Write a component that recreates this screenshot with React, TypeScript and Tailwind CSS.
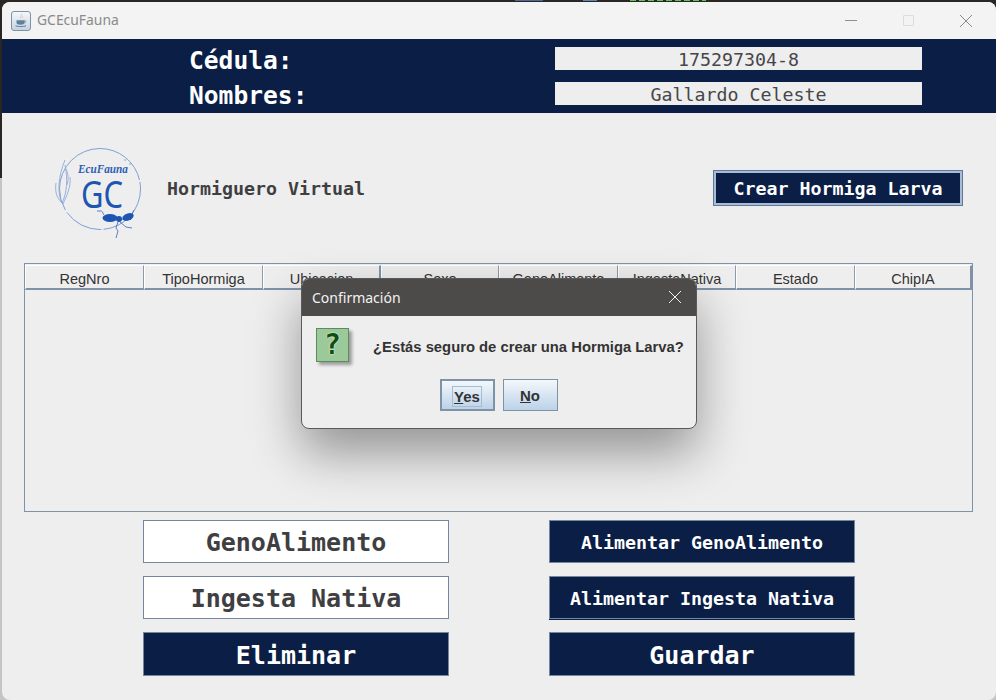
import React from "react";

const mono = "font-['DejaVu_Sans_Mono',monospace]";
const arial = "font-['Liberation_Sans',Arial,sans-serif]";
const ui = "font-['Noto_Sans',sans-serif]";

function JavaIcon() {
  return (
    <svg width="20" height="20" viewBox="0 0 20 20" className="block">
      <defs>
        <linearGradient id="jg" x1="0" y1="0" x2="0" y2="1">
          <stop offset="0" stopColor="#f6f8fa" />
          <stop offset="1" stopColor="#c3d2e0" />
        </linearGradient>
      </defs>
      <rect x="0.5" y="0.5" width="19" height="19" rx="2.5" fill="url(#jg)" stroke="#7c93a8" />
      <path d="M10 2.5c1.8 1.8-1.8 2.8-.4 5.2C7.8 6 11 4.8 10 2.5z" fill="#d9531e" />
      <path d="M11.8 4.5c.5 1.1-1.1 1.6-.7 3-.9-1 .6-1.8.7-3z" fill="#e08a2e" />
      <path d="M5.5 9.2h8v2.4c0 1.4-1.4 2.2-4 2.2s-4-.8-4-2.2z" fill="#5f7f9c" />
      <path d="M13.5 9.6c1.7-.3 1.8 1.8-.4 2.2" fill="none" stroke="#5f7f9c" strokeWidth="0.8" />
      <path d="M4.5 14.8c2.5 1 8 1 10.5 0" fill="none" stroke="#5f7f9c" strokeWidth="1" />
    </svg>
  );
}

function Logo() {
  return (
    <svg width="90" height="94" viewBox="0 0 90 94" className="block">
      <circle cx="46" cy="42" r="40.5" fill="none" stroke="#7f9fd4" strokeWidth="1" strokeDasharray="60 2 40 3 140 2" />
      <g fill="none" stroke="#8ea9d8" strokeWidth="0.9">
        <path d="M8 56C3 46 4 30 11 13" />
        <path d="M8 56C13 46 14 32 11 18" />
        <path d="M8 56C2 50 1 44 2 36" />
        <path d="M9 57C13 48 17 40 16 30" />
        <path d="M12 22c2 4 3 10 1 16" />
      </g>
      <text x="49" y="26" textAnchor="middle" fontFamily="'Liberation Serif',serif" fontStyle="italic" fontWeight="700" fontSize="13" fill="#2f5fb4" textLength="50" lengthAdjust="spacingAndGlyphs">EcuFauna</text>
      <text x="48" y="61" textAnchor="middle" fontFamily="'Noto Sans',sans-serif" fontWeight="400" fontSize="39" fill="#1c55b2" textLength="42" lengthAdjust="spacingAndGlyphs">GC</text>
      <g fill="#1c55b2">
        <ellipse cx="56" cy="71" rx="7.5" ry="4" />
        <circle cx="65" cy="72" r="3" />
        <ellipse cx="74" cy="70" rx="6" ry="3.4" transform="rotate(-22 74 70)" />
      </g>
      <g fill="none" stroke="#3566b8" strokeWidth="0.8">
        <path d="M50 68c-2-3-1-4-4-4l-3 0" />
        <path d="M64 75l-2 6 2 3-2 7" />
        <path d="M66 75l6 5 6 1" />
        <path d="M78 67l2-4" />
      </g>
      <g fill="#7f9fd4">
        <circle cx="71" cy="13" r="0.8" />
        <circle cx="76" cy="17" r="0.8" />
      </g>
    </svg>
  );
}

function HelpIcon() {
  return (
    <div className="flex h-[34px] w-[33px] shrink-0 items-center justify-center border border-[#5f8a5c] bg-[#9bc99a] shadow-[3px_3px_3px_rgba(90,90,90,0.55)]">
      <span className={`${mono} text-[28px] leading-none font-bold text-[#0f4d12] [text-shadow:0_0_2px_#e6f7e0,0_0_1px_#e6f7e0]`}>?</span>
    </div>
  );
}

function Btn({ label, dark, size, h = "h-[43px]", extra = "" }: { label: string; dark?: boolean; size: string; h?: string; extra?: string }) {
  return (
    <div
      className={`${mono} flex ${h} w-[306px] items-center justify-center border border-[#7388a0] pt-[3px] font-bold ${size} ${extra} ${
        dark ? "bg-[#0a1e46] text-white" : "bg-white text-[#3f3f42]"
      }`}
    >
      {label}
    </div>
  );
}

const cols = [
  { name: "RegNro", w: "w-[119px]" },
  { name: "TipoHormiga", w: "w-[119px]" },
  { name: "Ubicacion", w: "w-[118px]" },
  { name: "Sexo", w: "w-[118px]" },
  { name: "GenoAlimento", w: "w-[119px]" },
  { name: "IngestaNativa", w: "w-[118px]" },
  { name: "Estado", w: "w-[119px]" },
  { name: "ChipIA", w: "w-[117px]" },
];

export default function App() {
  return (
    <div className="relative h-[700px] w-[996px] overflow-hidden bg-[#c4c4c4]">
      <div className="absolute top-0 left-0 h-[12px] w-full bg-[#2a2624]" />
      <div className="absolute top-0 left-0 h-[178px] w-[2px] bg-[#2a2624]" />
      <svg width="996" height="2" className="absolute top-0 left-0 block">
        <rect x="515" y="0" width="28" height="1" fill="#4a6a9a" strokeDasharray="3 3" />
        <rect x="583" y="0" width="14" height="1" fill="#5f86b8" />
        <line x1="630" y1="0.5" x2="706" y2="0.5" stroke="#59c95c" strokeDasharray="6 3" />
      </svg>
      <div className="relative mt-[2px] ml-[2px] flex h-[698px] flex-col overflow-hidden rounded-[8px] bg-[#eeeeee]">
        {/* Title bar */}
        <div className="flex h-[37px] shrink-0 items-center bg-[#f3f3f3] pl-[9px]">
          <JavaIcon />
          <span className={`${ui} ml-[6px] text-[13.9px] text-[#8a8a8a]`}>GCEcuFauna</span>
          <div className="ml-auto flex items-center pr-[23px] text-[#8f8f8f]">
            <div className="h-px w-[12px] bg-[#8f8f8f]" />
            <div className="ml-[46px] h-[11px] w-[11px] rounded-[1px] border border-[#dcdcdc]" />
            <svg width="14" height="14" viewBox="0 0 14 14" className="ml-[45px]">
              <path d="M1 1l12 12M13 1L1 13" stroke="#8a8a8a" strokeWidth="1" />
            </svg>
          </div>
        </div>
        {/* Header */}
        <div className={`${mono} flex h-[74px] shrink-0 flex-col bg-[#0a1e46]`}>
          <div className="mt-[8px] flex h-[23px] items-center">
            <span className="ml-[187px] w-[366px] pt-[5px] text-[24.6px] leading-none font-bold text-white">Cédula:</span>
            <div className="flex h-[23px] w-[367px] items-center justify-center bg-[#eeeeee] pt-[2px] text-[18.3px] text-[#46464a]">175297304-8</div>
          </div>
          <div className="mt-[12px] flex h-[23px] items-center">
            <span className="ml-[187px] w-[366px] pt-[5px] text-[24.6px] leading-none font-bold text-white">Nombres:</span>
            <div className="flex h-[23px] w-[367px] items-center justify-center bg-[#eeeeee] pt-[2px] text-[18.3px] text-[#46464a]">Gallardo Celeste</div>
          </div>
        </div>
        {/* Logo row */}
        <div className="mt-[34px] flex h-[94px] shrink-0 items-start">
          <div className="ml-[52px]">
            <Logo />
          </div>
          <span className={`${mono} mt-[28px] ml-[23px] text-[18.3px] leading-[27px] font-bold text-[#3f3f42]`}>Hormiguero Virtual</span>
          <div
            className={`${mono} mt-[24px] mr-[34px] ml-auto flex h-[34px] w-[248px] items-center justify-center border-2 border-[#a9bcd3] bg-[#0a1e46] pt-px text-[18.3px] font-bold text-white outline outline-1 outline-[#5d7a9c]`}
          >
            Crear Hormiga Larva
          </div>
        </div>
        {/* Table */}
        <div className="mt-[22px] ml-[22px] h-[249px] w-[949px] shrink-0 border border-[#7f93a8] pt-[1px]">
          <div className={`${arial} flex h-[25px] text-[14.5px] text-[#333333]`}>
            {cols.map((c, i) => (
              <div
                key={c.name}
                className={`flex h-[25px] ${c.w} shrink-0 items-end justify-center border-t border-b-2 border-l border-t-white border-b-[#7f93a8] border-l-white leading-[17px] ${
                  i === 2 || i === 7 ? "border-r-2 border-r-[#7f93a8]" : "border-r border-r-[#8a9bb0]"
                }`}
              >
                {c.name}
              </div>
            ))}
          </div>
        </div>
        {/* Buttons */}
        <div className="mt-[8px] ml-[141px] grid w-[712px] shrink-0 grid-cols-[306px_306px] justify-between gap-y-[13px]">
          <Btn label="GenoAlimento" size="text-[25px]" />
          <Btn label="Alimentar GenoAlimento" size="text-[18.3px]" dark />
          <Btn label="Ingesta Nativa" size="text-[25px]" />
          <Btn label="Alimentar Ingesta Nativa" size="text-[18.3px]" dark extra="shadow-[0_1px_0_#0a1e46]" />
          <Btn label="Eliminar" size="text-[25px]" dark h="h-[44px]" />
          <Btn label="Guardar" size="text-[25px]" dark h="h-[44px]" />
        </div>
      </div>

      {/* Dialog */}
      <div className="absolute top-[278px] left-[301px] flex h-[151px] w-[396px] flex-col overflow-hidden rounded-[8px] border border-[#5a5a5a] bg-[#eeeeee] shadow-[0_24px_50px_rgba(0,0,0,0.38)]">
        <div className="-mx-px -mt-px flex h-[38px] shrink-0 items-center justify-between bg-[#4d4b49] pr-[15px] pl-[11px]">
          <span className={`${ui} text-[14px] text-[#f2f2f2]`}>Confirmación</span>
          <svg width="14" height="14" viewBox="0 0 14 14">
            <path d="M1 1l12 12M13 1L1 13" stroke="#f2f2f2" strokeWidth="1" />
          </svg>
        </div>
        <div className="mt-[12px] ml-[14px] flex items-start">
          <HelpIcon />
          <span className={`${arial} mt-[8px] ml-[24px] text-[14.8px] leading-[22px] font-bold whitespace-nowrap text-[#333333]`}>¿Estás seguro de crear una Hormiga Larva?</span>
        </div>
        <div className={`${arial} mt-[17px] flex justify-center gap-[8px] pr-[1px] text-[15px] font-bold text-[#333333]`}>
          <div className="flex h-[32px] w-[55px] items-center justify-center border-2 border-[#7f93a8] bg-gradient-to-b from-[#f4f8fb] to-[#bcd2e8] pt-[2px]">
            <span className="border border-[#a5bcd3] px-px leading-[19px]"><u>Y</u>es</span>
          </div>
          <div className="flex h-[32px] w-[55px] items-center justify-center border border-[#7f93a8] bg-gradient-to-b from-[#f4f8fb] to-[#bcd2e8] pt-[2px]">
            <span><u>N</u>o</span>
          </div>
        </div>
      </div>
    </div>
  );
}
